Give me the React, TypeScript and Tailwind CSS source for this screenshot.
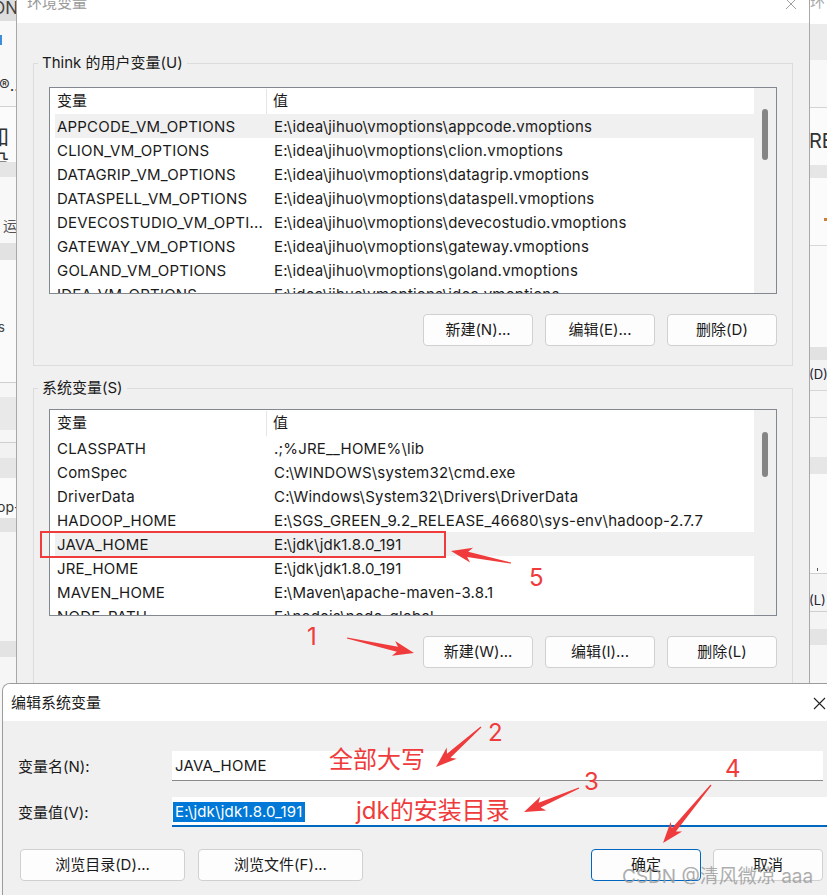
import React from "react";

const userVars: [string, string][] = [
  ["APPCODE_VM_OPTIONS", "E:\\idea\\jihuo\\vmoptions\\appcode.vmoptions"],
  ["CLION_VM_OPTIONS", "E:\\idea\\jihuo\\vmoptions\\clion.vmoptions"],
  ["DATAGRIP_VM_OPTIONS", "E:\\idea\\jihuo\\vmoptions\\datagrip.vmoptions"],
  ["DATASPELL_VM_OPTIONS", "E:\\idea\\jihuo\\vmoptions\\dataspell.vmoptions"],
  ["DEVECOSTUDIO_VM_OPTI...", "E:\\idea\\jihuo\\vmoptions\\devecostudio.vmoptions"],
  ["GATEWAY_VM_OPTIONS", "E:\\idea\\jihuo\\vmoptions\\gateway.vmoptions"],
  ["GOLAND_VM_OPTIONS", "E:\\idea\\jihuo\\vmoptions\\goland.vmoptions"],
  ["IDEA_VM_OPTIONS", "E:\\idea\\jihuo\\vmoptions\\idea.vmoptions"],
];

const sysVars: [string, string][] = [
  ["CLASSPATH", ".;%JRE__HOME%\\lib"],
  ["ComSpec", "C:\\WINDOWS\\system32\\cmd.exe"],
  ["DriverData", "C:\\Windows\\System32\\Drivers\\DriverData"],
  ["HADOOP_HOME", "E:\\SGS_GREEN_9.2_RELEASE_46680\\sys-env\\hadoop-2.7.7"],
  ["JAVA_HOME", "E:\\jdk\\jdk1.8.0_191"],
  ["JRE_HOME", "E:\\jdk\\jdk1.8.0_191"],
  ["MAVEN_HOME", "E:\\Maven\\apache-maven-3.8.1"],
  ["NODE_PATH", "E:\\nodejs\\node_global"],
];

function VarList({
  rows,
  selected,
  thumbTop,
  thumbH,
}: {
  rows: [string, string][];
  selected: number;
  thumbTop: number;
  thumbH: number;
}) {
  return (
    <div className="flex h-[207px] overflow-hidden border border-[#828790] bg-white">
      <div className="flex-1 overflow-hidden">
        <div className="flex h-[26px] items-center pt-[1px]">
          <div className="flex h-full w-[217px] items-center border-r border-[#e5e5e5] pl-[7px]">变量</div>
          <div className="pl-[6px]">值</div>
        </div>
        <div className="pl-[5px]">
          {rows.map(([k, v], i) => (
            <div
              key={k}
              className={`flex h-[24px] items-center whitespace-nowrap pl-[2px] pt-[2px] tracking-[0.2px] ${
                i === selected ? "bg-[#f0f0f0]" : ""
              }`}
            >
              <div className="w-[217px] shrink-0">{k}</div>
              <div>{v}</div>
            </div>
          ))}
        </div>
      </div>
      <div className="relative w-[22px] shrink-0 bg-[#f0f0f0]">
        <div
          className="absolute left-[8px] w-[6px] rounded-[3px] bg-[#858585]"
          style={{ top: thumbTop, height: thumbH }}
        />
      </div>
    </div>
  );
}

function Btn({ children, w = "w-[110px]", primary = false }: { children: React.ReactNode; w?: string; primary?: boolean }) {
  return (
    <div
      className={`flex h-[32px] ${w} items-center justify-center rounded-[4px] border bg-[#fdfdfd] ${
        primary ? "border-[#0067c0]" : "border-[#d0d0d0]"
      }`}
    >
      {children}
    </div>
  );
}

function arrowPts(tx: number, ty: number, px: number, py: number) {
  const dx = px - tx;
  const dy = py - ty;
  const L = Math.hypot(dx, dy);
  const ux = dx / L;
  const uy = dy / L;
  const nx = -uy;
  const ny = ux;
  const p = (d: number, w: number) => `${px - ux * d + nx * w},${py - uy * d + ny * w}`;
  return [
    `${tx + nx * 0.6},${ty + ny * 0.6}`,
    p(17, 2.6),
    p(21, 7.5),
    `${px},${py}`,
    p(21, -7.5),
    p(17, -2.6),
    `${tx - nx * 0.6},${ty - ny * 0.6}`,
  ].join(" ");
}

function Band({ h, c, children }: { h: number; c: string; children?: React.ReactNode }) {
  return (
    <div className={`relative overflow-hidden ${c}`} style={{ height: h }}>
      {children}
    </div>
  );
}

export default function App() {
  return (
    <div className="relative h-[895px] w-[827px] overflow-hidden bg-[#f3f3f3] font-['Inter','Noto_Sans_CJK_SC',sans-serif] text-[15px] text-[#1a1a1a]">
      {/* left background window strip */}
      <div className="absolute left-0 top-0 flex h-[895px] w-[17px] flex-col">
        <Band h={21} c="bg-[#dedede]">
          <div className="absolute right-[-1px] top-[-4px] text-[17px] text-[#444]">ON</div>
        </Band>
        <Band h={86} c="bg-[#f8f8f8]">
          <div className="absolute left-0 top-[14px] h-[10px] w-[2px] bg-[#3c8ed8]" />
          <div className="absolute left-[-1px] top-[52px] text-[16px] text-[#333]">®..</div>
        </Band>
        <Band h={1} c="bg-[#d2d2d2]" />
        <Band h={55} c="bg-[#fbfbfb]">
          <div className="absolute left-[-13px] top-[16px] text-[22px] leading-[26px] text-[#333]">加设</div>
        </Band>
        <Band h={15} c="bg-[#e5e5e5]" />
        <Band h={67} c="bg-[#f8f8f8]">
          <div className="absolute left-[3px] top-[40px] text-[14px] leading-[18px] text-[#555]">运</div>
        </Band>
        <Band h={17} c="bg-[#e2e2e2]" />
        <Band h={123} c="bg-[#fafafa]">
          <div className="absolute left-[-2px] top-[58px] text-[13px] text-[#444]">s</div>
        </Band>
        <Band h={1} c="bg-[#cfcfcf]" />
        <Band h={14} c="bg-[#f6f6f6]" />
        <Band h={33} c="bg-[#e9e9e9]" />
        <Band h={12} c="bg-[#f6f6f6]" />
        <Band h={1} c="bg-[#cfcfcf]" />
        <Band h={15} c="bg-[#f2f2f2]" />
        <Band h={20} c="bg-[#e6e6e6]" />
        <Band h={40} c="bg-[#fafafa]">
          <div className="absolute left-[-3px] top-[20px] text-[14px] leading-[18px] text-[#333]">op-</div>
        </Band>
        <Band h={15} c="bg-[#e3e3e3]" />
        <Band h={109} c="bg-[#f6f6f6]" />
        <Band h={16} c="bg-[#e3e3e3]" />
        <Band h={240} c="bg-[#f6f6f6]" />
      </div>

      {/* right background window strip */}
      <div className="absolute left-[809px] top-0 flex h-[895px] w-[18px] flex-col">
        <Band h={24} c="bg-white">
          <div className="absolute left-[1px] top-[-9px] text-[15px] text-[#aaa]">环</div>
        </Band>
        <Band h={36} c="bg-[#ececec]" />
        <Band h={47} c="bg-[#f8f8f8]" />
        <Band h={1} c="bg-[#d4d4d4]" />
        <Band h={57} c="bg-[#fbfbfb]">
          <div className="absolute left-[0px] top-[20px] text-[20px] leading-[26px] text-[#333]">RE</div>
        </Band>
        <Band h={13} c="bg-[#e6e6e6]" />
        <Band h={67} c="bg-[#fbfbfb]">
          <div className="absolute left-[15px] top-[40px] h-[3px] w-[3px] bg-[#d08030]" />
        </Band>
        <Band h={1} c="bg-[#d8d8d8]" />
        <Band h={101} c="bg-[#fafafa]" />
        <Band h={13} c="bg-[#e2e2e2]" />
        <Band h={30} c="bg-[#f3f3f3]">
          <div className="absolute left-[0px] top-[5px] text-[13px] leading-[18px] text-[#223]">(D)</div>
        </Band>
        <Band h={1} c="bg-[#d6d6d6]" />
        <Band h={26} c="bg-[#f6f6f6]" />
        <Band h={1} c="bg-[#d6d6d6]" />
        <Band h={39} c="bg-[#f6f6f6]" />
        <Band h={17} c="bg-[#e6e6e6]" />
        <Band h={99} c="bg-[#fafafa]">
          <div className="absolute left-[8px] top-[94px] h-[3px] w-[1px] bg-[#555]" />
        </Band>
        <Band h={1} c="bg-[#cfcfcf]" />
        <Band h={37} c="bg-[#f4f4f4]">
          <div className="absolute left-[0px] top-[17px] text-[13px] leading-[18px] text-[#223]">(L)</div>
        </Band>
        <Band h={1} c="bg-[#cfcfcf]" />
        <Band h={17} c="bg-[#f4f4f4]" />
        <Band h={16} c="bg-[#e4e4e4]" />
        <Band h={230} c="bg-[#f6f6f6]" />
      </div>

      {/* main window: 环境变量 */}
      <div className="absolute left-[16px] top-0 flex h-[895px] w-[794px] flex-col border-x border-[#a8a8a8] bg-[#f0f0f0]">
        <div className="relative h-[23px] bg-white">
          <div className="absolute left-[10px] top-[-8px] text-[15px] leading-[22px] text-[#9a9a9a]">环境变量</div>
          <svg className="absolute right-[12px] top-[-2px]" width="12" height="12" viewBox="0 0 12 12">
            <path d="M1 1L11 11M11 1L1 11" stroke="#a0a0a0" strokeWidth="1" />
          </svg>
        </div>

        <fieldset className="mx-[16px] mt-[30px] border border-[#dcdcdc] p-0">
          <legend className="ml-[4px] px-[4px] leading-[20px]">Think 的用户变量(U)</legend>
          <div className="px-[15px] pt-[14px] pb-[19px]">
            <VarList rows={userVars} selected={0} thumbTop={21} thumbH={51} />
            <div className="mt-[20px] flex justify-end gap-[12px]">
              <Btn>新建(N)...</Btn>
              <Btn>编辑(E)...</Btn>
              <Btn>删除(D)</Btn>
            </div>
          </div>
        </fieldset>

        <fieldset className="mx-[16px] mt-[12px] border border-[#dcdcdc] p-0">
          <legend className="ml-[4px] px-[4px] leading-[20px]">系统变量(S)</legend>
          <div className="px-[15px] pt-[11px] pb-[19px]">
            <VarList rows={sysVars} selected={4} thumbTop={22} thumbH={45} />
            <div className="mt-[20px] flex justify-end gap-[12px]">
              <Btn>新建(W)...</Btn>
              <Btn>编辑(I)...</Btn>
              <Btn>删除(L)</Btn>
            </div>
          </div>
        </fieldset>
      </div>

      {/* edit dialog: 编辑系统变量 */}
      <div className="absolute left-[2px] top-[683px] flex h-[230px] w-[830px] flex-col overflow-hidden rounded-tl-[8px] border-l border-t border-[#9c9c9c] bg-[#f0f0f0]">
        <div className="relative flex h-[37px] items-center bg-white pl-[8px]">
          <span className="leading-[20px]">编辑系统变量</span>
          <svg className="absolute left-[810px] top-[13px]" width="13" height="13" viewBox="0 0 13 13">
            <path d="M1 1L12 12M12 1L1 12" stroke="#222" strokeWidth="1.1" />
          </svg>
        </div>
        <div className="flex flex-col pl-[15px] pr-[9px] pt-[30px]">
          <div className="flex items-center">
            <div className="w-[154px] shrink-0 pt-[2px]">变量名(N):</div>
            <div className="flex h-[30px] flex-1 items-center border-b border-[#8a8a8a] bg-white pl-[3px] pt-[1px] tracking-[0.2px]">JAVA_HOME</div>
          </div>
          <div className="mt-[16px] flex items-center">
            <div className="w-[154px] shrink-0 pt-[2px]">变量值(V):</div>
            <div className="-mr-[6px] flex h-[30px] flex-1 items-center border-b-2 border-[#0067c0] bg-white pl-[1px] pt-[1px]">
              <span className="bg-[#0078d7] px-[2px] leading-[20px] tracking-[0.2px] text-white">E:\jdk\jdk1.8.0_191</span>
            </div>
          </div>
          <div className="mt-[22px] flex items-center">
            <div className="ml-[2px] flex gap-[13px]">
              <Btn w="w-[165px]">浏览目录(D)...</Btn>
              <Btn w="w-[165px]">浏览文件(F)...</Btn>
            </div>
            <div className="flex-1" />
            <div className="flex gap-[12px]">
              <Btn primary>确定</Btn>
              <Btn>取消</Btn>
            </div>
          </div>
        </div>
      </div>

      {/* annotations */}
      <div className="pointer-events-none absolute left-[40px] top-[531px] h-[27px] w-[406px] border-2 border-[#ef3b3b]" />
      <svg className="pointer-events-none absolute left-0 top-0" width="827" height="895" viewBox="0 0 827 895">
        <polygon points={arrowPts(347, 638, 414, 653)} fill="#ef3b3b" />
        <polygon points={arrowPts(511, 563, 451, 551)} fill="#ef3b3b" />
        <polygon points={arrowPts(481, 727, 436, 767)} fill="#ef3b3b" />
        <polygon points={arrowPts(579, 788, 524, 812)} fill="#ef3b3b" />
        <polygon points={arrowPts(711, 785, 663, 843)} fill="#ef3b3b" />
      </svg>
      <div className="pointer-events-none absolute left-[307px] top-[622px] text-[24px] leading-[30px] text-[#ef3b3b]">1</div>
      <div className="pointer-events-none absolute left-[488px] top-[718px] text-[24px] leading-[30px] text-[#ef3b3b]">2</div>
      <div className="pointer-events-none absolute left-[584px] top-[767px] text-[24px] leading-[30px] text-[#ef3b3b]">3</div>
      <div className="pointer-events-none absolute left-[725px] top-[754px] text-[24px] leading-[30px] text-[#ef3b3b]">4</div>
      <div className="pointer-events-none absolute left-[529px] top-[563px] text-[24px] leading-[30px] text-[#ef3b3b]">5</div>
      <div className="pointer-events-none absolute left-[329px] top-[745px] text-[24px] leading-[30px] text-[#ef3b3b]">全部大写</div>
      <div className="pointer-events-none absolute left-[356px] top-[796px] text-[24px] leading-[30px] text-[#ef3b3b]">jdk的安装目录</div>
      <div className="pointer-events-none absolute left-[622px] top-[865px] text-[19px] leading-[24px] text-[#9a9a9a] opacity-80">CSDN @清风微凉 aaa</div>
    </div>
  );
}
